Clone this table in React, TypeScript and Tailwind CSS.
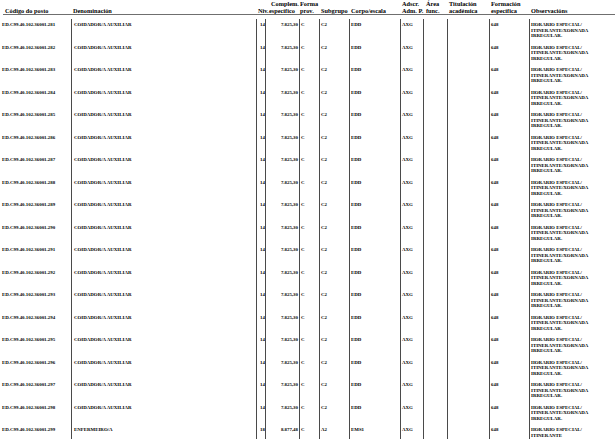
const codes = Array.from({ length: 19 }, (_, i) => 281 + i)

type Row = {
    code: string
    denom: string
    niv: string
    comp: string
    forma: string
    sub: string
    corpo: string
    adscr: string
    form: string
    obs: string[]
}

const rows: Row[] = codes.map((n) => {
    const last = n === 299
    return {
        code: `ED.C99.40.102.36001.${n}`,
        denom: last ? 'ENFERMEIRO/A' : 'COIDADOR/A AUXILIAR',
        niv: last ? '18' : '14',
        comp: last ? '8.877,48' : '7.825,30',
        forma: 'C',
        sub: last ? 'A2' : 'C2',
        corpo: last ? 'EMS1' : 'EDD',
        adscr: 'AXG',
        form: '648',
        obs: last
            ? ['HORARIO ESPECIAL/', 'ITINERANTE']
            : ['HORARIO ESPECIAL/', 'ITINERANTE/XORNADA', 'IRREGULAR.'],
    }
})

function Head({ children, className }: { children: React.ReactNode; className: string }) {
    return <div className={`flex flex-col justify-end whitespace-nowrap ${className}`}>{children}</div>
}

export default function App() {
    return (
        <div
            className="w-[615px] h-[439px] overflow-hidden bg-white text-black font-bold"
            style={{ fontFamily: '"Liberation Serif", "Times New Roman", serif' }}
        >
            <div className="flex h-[15px] ml-[3px] border-b border-[#6f6f6f] text-[6.3px] leading-[7px]">
                <Head className="w-[68px] pl-[2px]">Código do posto</Head>
                <Head className="w-[185px] pl-[2px]">Denominación</Head>
                <Head className="w-[9px] pl-[2px]">Niv.</Head>
                <Head className="w-[34px]">
                    <span className="pl-[6px]">Complem.</span>
                    <span className="pl-[4px]">específico</span>
                </Head>
                <Head className="w-[20px] pl-[1px]">
                    <span>Forma</span>
                    <span>prov.</span>
                </Head>
                <Head className="w-[30px] pl-[2px]">Subgrupo</Head>
                <Head className="w-[51px] pl-[2px]">Corpo/escala</Head>
                <Head className="w-[23px] pl-[2px]">
                    <span>Adscr.</span>
                    <span>Adm. P.</span>
                </Head>
                <Head className="w-[24px] pl-[3px]">
                    <span>Área</span>
                    <span>func.</span>
                </Head>
                <Head className="w-[42px] pl-[2px]">
                    <span>Titulación</span>
                    <span>académica</span>
                </Head>
                <Head className="w-[40px] pl-[2px]">
                    <span>Formación</span>
                    <span>específica</span>
                </Head>
                <Head className="flex-1 pl-[2px]">Observacións</Head>
            </div>
            <div className="mt-[4px] text-[4.9px] leading-[5.6px]">
                {rows.map((r) => (
                    <div key={r.code} className="flex h-[22.5px] whitespace-nowrap">
                        <div className="w-[71px] pl-[2px] pt-[3px]">{r.code}</div>
                        <div className="w-[185px] pl-[2px] pt-[3px] border-l border-[#4a4a4a]">{r.denom}</div>
                        <div className="w-[9px] pl-[3px] pt-[3px] border-l border-[#4a4a4a]">{r.niv}</div>
                        <div className="w-[34px] pr-[1px] pt-[3px] text-right border-l border-[#4a4a4a]">{r.comp}</div>
                        <div className="w-[20px] pl-[1px] pt-[3px] border-l border-[#4a4a4a]">{r.forma}</div>
                        <div className="w-[30px] pl-[1px] pt-[3px] border-l border-[#4a4a4a]">{r.sub}</div>
                        <div className="w-[51px] pl-[1px] pt-[3px] border-l border-[#4a4a4a]">{r.corpo}</div>
                        <div className="w-[23px] pl-[1px] pt-[3px] border-l border-[#4a4a4a]">{r.adscr}</div>
                        <div className="w-[24px] border-l border-[#4a4a4a]" />
                        <div className="w-[42px] border-l border-[#4a4a4a]" />
                        <div className="w-[40px] pl-[1px] pt-[3px] border-l border-[#4a4a4a]">{r.form}</div>
                        <div className="flex-1 pl-[1px] pt-[3px] flex flex-col border-l border-[#4a4a4a]">
                            {r.obs.map((o) => (
                                <span key={o}>{o}</span>
                            ))}
                        </div>
                    </div>
                ))}
            </div>
        </div>
    )
}
